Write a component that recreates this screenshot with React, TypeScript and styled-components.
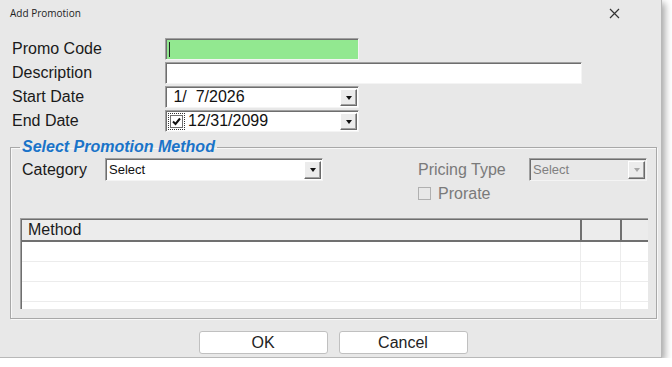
import React from "react";
import styled, { createGlobalStyle } from "styled-components";

const GlobalStyle = createGlobalStyle`
  html, body { margin: 0; padding: 0; background: #ffffff; }
  body { font-family: "Liberation Sans", Arial, sans-serif; }
  * { box-sizing: border-box; }
`;

const Window = styled.div`
  width: 662px;
  height: 358px;
  background: #e8e8e8;
  border-right: 1px solid #b8b8b8;
  border-bottom: 1px solid #b8b8b8;
  box-shadow: 3px 3px 7px rgba(0, 0, 0, 0.35);
  display: flex;
  flex-direction: column;
  color: #1a1a1a;
`;

const TitleBar = styled.div`
  height: 26px;
  display: flex;
  align-items: center;
  justify-content: space-between;
  padding: 0 41px 0 10px;
  font-family: "Open Sans", "Noto Sans", sans-serif;
  font-size: 10px;
  color: #222;
`;

const CloseIcon = () => (
  <svg width="11" height="11" viewBox="0 0 11 11">
    <path d="M1 1 L10 10 M10 1 L1 10" stroke="#333" strokeWidth="1.2" />
  </svg>
);

const Form = styled.div`
  margin-top: 12px;
  padding-left: 12px;
  display: grid;
  grid-template-columns: 153px 1fr;
  grid-auto-rows: 22px;
  row-gap: 2px;
  align-items: center;
`;

const Label = styled.span<{ $muted?: boolean }>`
  font-size: 16px;
  color: ${(p) => (p.$muted ? "#7a7a7a" : "#1a1a1a")};
  white-space: nowrap;
`;

const Field = styled.div<{ $width: number; $height?: number; $bg?: string }>`
  width: ${(p) => p.$width}px;
  height: ${(p) => p.$height || 22}px;
  background: ${(p) => p.$bg || "#ffffff"};
  border-top: 1px solid #a0a0a0;
  border-left: 1px solid #a0a0a0;
  border-right: 1px solid #f4f4f4;
  border-bottom: 1px solid #f4f4f4;
  box-shadow: inset 1px 1px 0 #6e6e6e;
  display: flex;
  align-items: center;
`;

const Caret = styled.span`
  width: 1px;
  height: 15px;
  margin-left: 3px;
  background: #222;
`;

const ComboText = styled.span<{ $size: number; $muted?: boolean }>`
  flex: 1;
  font-size: ${(p) => p.$size}px;
  color: ${(p) => (p.$muted ? "#808080" : "#111")};
  white-space: pre;
  padding-left: 3px;
`;

const DropButton = styled.div<{ $disabled?: boolean }>`
  width: 17px;
  flex-shrink: 0;
  align-self: stretch;
  margin: 2px 1px 1px 0;
  background: #ececec;
  border-top: 1px solid #ffffff;
  border-left: 1px solid #ffffff;
  border-right: 1px solid #6a6a6a;
  border-bottom: 1px solid #6a6a6a;
  box-shadow: inset -1px -1px 0 #a0a0a0;
  display: flex;
  align-items: center;
  justify-content: center;
  &::after {
    content: "";
    border-left: 3.5px solid transparent;
    border-right: 3.5px solid transparent;
    border-top: 4px solid ${(p) => (p.$disabled ? "#a8a8a8" : "#111")};
  }
`;

const FocusBox = styled.span`
  margin-left: 2px;
  padding: 1px;
  border: 1px dotted #333;
  display: flex;
`;

const CheckBox = styled.span<{ $muted?: boolean }>`
  width: 13px;
  height: 13px;
  border: 1px solid ${(p) => (p.$muted ? "#b0b0b0" : "#6e6e6e")};
  background: ${(p) => (p.$muted ? "#e8e8e8" : "#ffffff")};
  display: flex;
  align-items: center;
  justify-content: center;
  flex-shrink: 0;
`;

const Tick = () => (
  <svg width="9" height="9" viewBox="0 0 9 9">
    <path d="M1 4.5 L3.5 7 L8 1.5" stroke="#111" strokeWidth="2" fill="none" />
  </svg>
);

const GroupBox = styled.fieldset`
  margin: 6px 4px 0 10px;
  padding: 2px 8px 9px 9px;
  border: 1px solid #a8a8a8;
  box-shadow: inset 1px 1px 0 #f8f8f8, 1px 1px 0 #f8f8f8;
  min-width: 0;
`;

const Legend = styled.legend`
  margin-left: 0;
  padding: 0 2px;
  font-size: 16px;
  line-height: 18px;
  font-weight: bold;
  font-style: italic;
  color: #1a74c9;
`;

const Options = styled.div`
  display: grid;
  grid-template-columns: 83px 218px 95px 111px 118px;
  grid-template-rows: 23px 23px;
  row-gap: 1px;
  align-items: center;
  padding-left: 2px;
`;

const Prorate = styled.div`
  grid-column: 4 / span 2;
  display: flex;
  align-items: center;
  gap: 7px;
`;

const Table = styled.div`
  margin-top: 13px;
  height: 91px;
  background: #ffffff;
  border-top: 1px solid #a0a0a0;
  border-left: 1px solid #a0a0a0;
  box-shadow: inset 1px 1px 0 #6e6e6e;
  overflow: hidden;
  display: flex;
  flex-direction: column;
`;

const Row = styled.div<{ $header?: boolean }>`
  flex-shrink: 0;
  display: grid;
  grid-template-columns: 1fr 40px 28px;
  height: ${(p) => (p.$header ? 22 : 20)}px;
  margin-left: 1px;
  margin-top: ${(p) => (p.$header ? 1 : 0)}px;
  background: ${(p) => (p.$header ? "#ececec" : "#ffffff")};
  border-bottom: ${(p) => (p.$header ? "2px solid #707070" : "1px solid #ececec")};
`;

const Cell = styled.div<{ $header?: boolean }>`
  font-size: 16px;
  padding-left: 6px;
  display: flex;
  align-items: center;
  border-left: ${(p) => (p.$header ? "2px solid #707070" : "1px solid #ececec")};
  &:first-child {
    border-left: none;
  }
`;

const Buttons = styled.div`
  flex: 1;
  display: flex;
  justify-content: center;
  align-items: flex-start;
  gap: 11px;
  padding: 12px 0 0 5px;
`;

const Button = styled.button`
  width: 129px;
  height: 23px;
  background: #ffffff;
  border: 1px solid #c0c0c0;
  border-radius: 3px;
  font-family: "Liberation Sans", Arial, sans-serif;
  font-size: 16px;
  color: #222;
  padding: 0;
`;

const Combo = ({
  width,
  text,
  size,
  disabled,
  check,
  height,
}: {
  width: number;
  text: string;
  size: number;
  disabled?: boolean;
  check?: boolean;
  height?: number;
}) => (
  <Field $width={width} $height={height} $bg={disabled ? "#e8e8e8" : undefined}>
    {check && (
      <FocusBox>
        <CheckBox>
          <Tick />
        </CheckBox>
      </FocusBox>
    )}
    <ComboText $size={size} $muted={disabled}>
      {text}
    </ComboText>
    <DropButton $disabled={disabled} />
  </Field>
);

const methodRows = [0, 1, 2, 3];

export default function App() {
  return (
    <>
      <GlobalStyle />
      <Window>
        <TitleBar>
          <span>Add Promotion</span>
          <CloseIcon />
        </TitleBar>
        <Form>
          <Label>Promo Code</Label>
          <Field $width={194} $bg="#92e890">
            <Caret />
          </Field>
          <Label>Description</Label>
          <Field $width={417} />
          <Label>Start Date</Label>
          <Combo width={194} text={" 1/  7/2026"} size={16} />
          <Label>End Date</Label>
          <Combo width={194} text="12/31/2099" size={16} check />
        </Form>
        <GroupBox>
          <Legend>Select Promotion Method</Legend>
          <Options>
            <Label>Category</Label>
            <Combo width={218} height={23} text="Select" size={13} />
            <span />
            <Label $muted>Pricing Type</Label>
            <Combo width={118} height={23} text="Select" size={13} disabled />
            <span />
            <span />
            <span />
            <Prorate>
              <CheckBox $muted />
              <Label $muted>Prorate</Label>
            </Prorate>
          </Options>
          <Table>
            <Row $header>
              <Cell $header>Method</Cell>
              <Cell $header />
              <Cell $header />
            </Row>
            {methodRows.map((r) => (
              <Row key={r}>
                <Cell />
                <Cell />
                <Cell />
              </Row>
            ))}
          </Table>
        </GroupBox>
        <Buttons>
          <Button>OK</Button>
          <Button>Cancel</Button>
        </Buttons>
      </Window>
    </>
  );
}
